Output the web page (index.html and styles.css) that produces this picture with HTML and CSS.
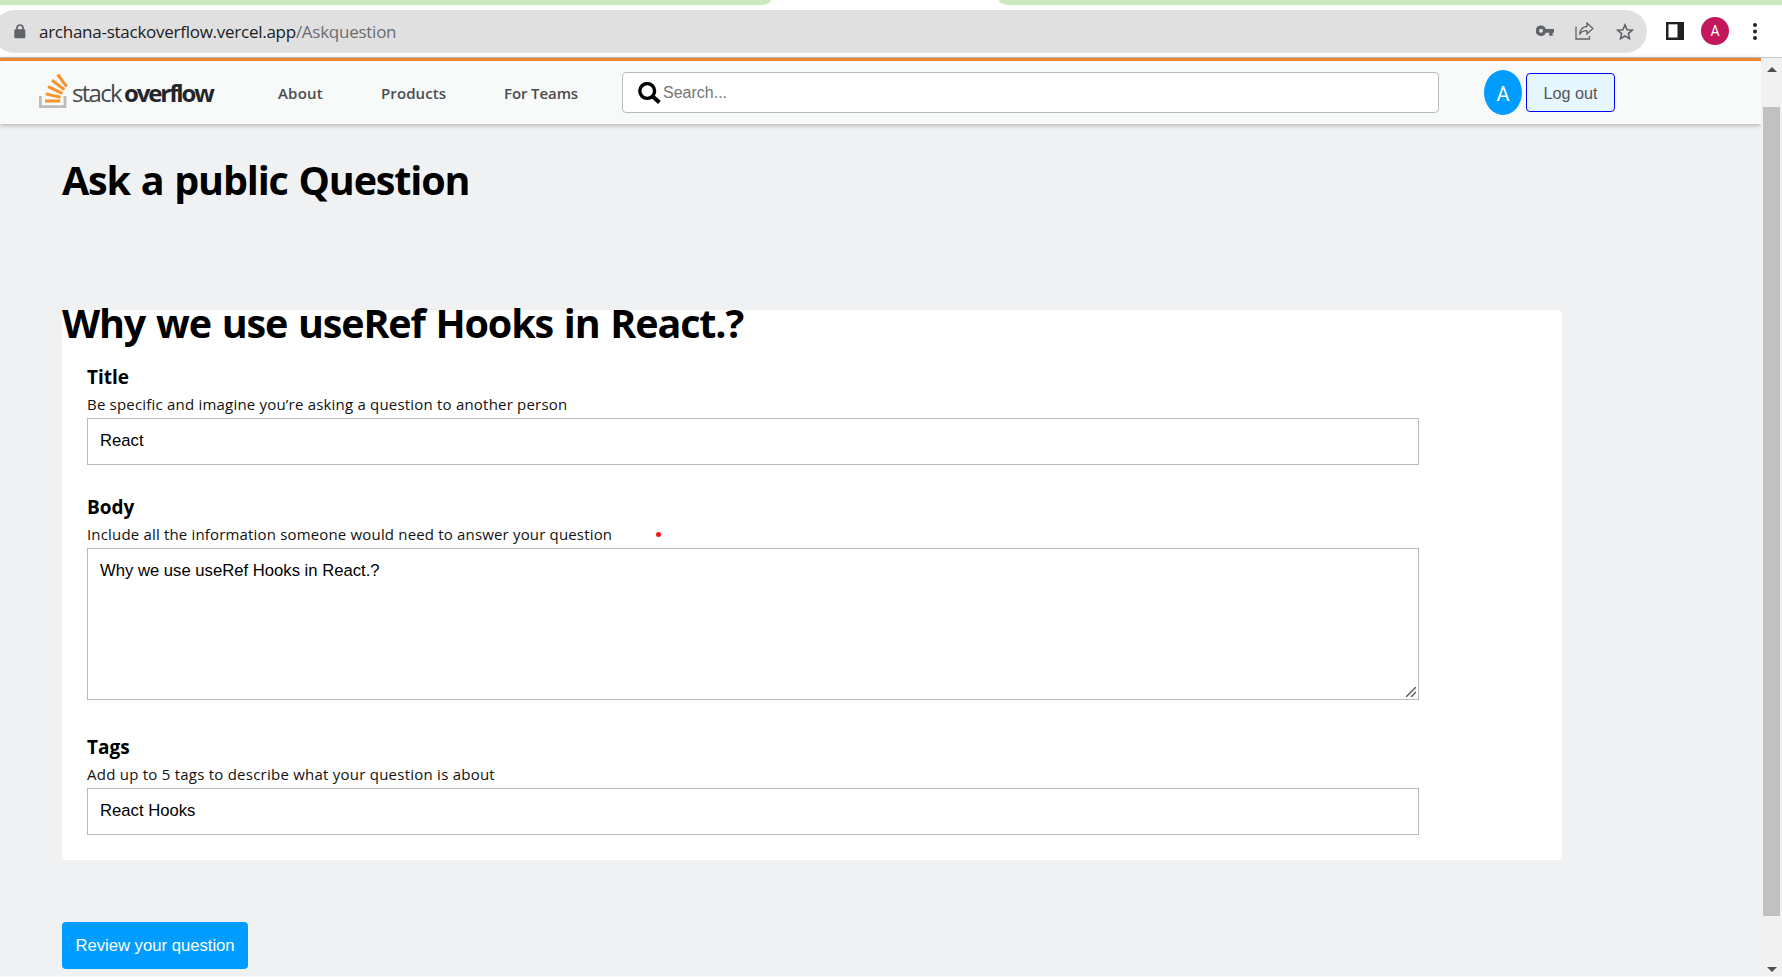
FILE: index.html
```
<!DOCTYPE html>
<html lang="en">
<head>
<meta charset="utf-8">
<title>Ask a public Question</title>
<link rel="stylesheet" href="styles.css">
</head>
<body>
<div class="window">
  <div class="tabstrip"><span class="tab tab-left"></span><span class="tab tab-right"></span></div>
  <div class="toolbar">
    <div class="omnibox">
      <svg class="lock" width="12" height="15" viewBox="0 0 12 15"><path fill="none" stroke="#5f6368" stroke-width="1.7" d="M3 6V4a3 3 0 0 1 6 0v2"/><rect x="0.3" y="5.3" width="11" height="9" rx="1.2" fill="#5f6368"/></svg>
      <div class="url"><span class="host">archana-stackoverflow.vercel.app</span><span class="path">/Askquestion</span></div>
      <svg class="key" width="18" height="12" viewBox="0 0 18 12"><path fill="#5f6368" fill-rule="evenodd" d="M5 .5a5 5 0 0 1 4.8 3.6H18v3.6h-1.300v3h-3.500v-3H9.800A5.200 5.200 0 1 1 5 .5Zm0 3.300a2 2 0 1 0 0 4 2 2 0 0 0 0-4Z"/></svg>
      <svg class="share" width="19" height="18" viewBox="0 0 19 18"><path fill="none" stroke="#5f6368" stroke-width="1.3" d="M1 4.500V17h13.500v-3M12 1l5.800 5.500L12 12V8.700C8 8.700 6 10 4.500 12.500 5 8 7.500 4.800 12 4.300Z"/></svg>
      <svg class="star" width="18" height="17" viewBox="0 0 18 17"><path fill="none" stroke="#5f6368" stroke-width="1.600" d="M9 1.900l2.100 4.800 5.200.5-3.900 3.400 1.100 5.100L9 13l-4.500 2.700 1.100-5.100L1.700 7.200l5.200-.5Z"/></svg>
    </div>
    <svg class="panel" width="18" height="18" viewBox="0 0 18 18"><rect width="18" height="18" fill="#202124"/><rect x="2.500" y="2.300" width="9" height="13.200" fill="#fff"/></svg>
    <div class="profile">A</div>
    <svg class="dots" width="4" height="17" viewBox="0 0 4 17"><g fill="#202124"><circle cx="2" cy="2" r="2"/><circle cx="2" cy="8.500" r="2"/><circle cx="2" cy="15" r="2"/></g></svg>
  </div>
  <div class="viewport">
    <div class="page">
      <nav class="navbar">
        <div class="logo">
          <svg width="29" height="36" viewBox="0 0 29 36"><path fill="none" stroke="#bcbcbc" stroke-width="2.800" d="M1.400 23V33.600H26V23"/><g stroke="#f8922b" stroke-width="3" fill="none"><path d="M6 28H21.300"/><path d="M6.700 20.900L21.600 24.200"/><path d="M9 13.700L23.500 20.300"/><path d="M13 7.200L25.300 16.600"/><path d="M18.700 1.500L27.600 13.600"/></g></svg>
          <div class="wordmark">stack<b>overflow</b></div>
        </div>
        <a class="link about">About</a><a class="link products">Products</a><a class="link teams">For Teams</a>
        <div class="search">
          <svg width="23" height="22" viewBox="0 0 23 22"><circle cx="9.200" cy="9" r="7.400" fill="none" stroke="#000" stroke-width="3.400"/><path stroke="#000" stroke-width="4" d="M14.500 14.200L21.400 20.500"/></svg>
          <span>Search...</span>
        </div>
        <div class="avatar">A</div>
        <button class="logout">Log out</button>
      </nav>
      <main class="ask">
        <h1 class="heading">Ask a public Question</h1>
        <section class="card">
          <h1 class="heading preview">Why we use useRef Hooks in React.?</h1>
          <div class="field">
            <h4 class="label">Title</h4>
            <p class="hint hint-title">Be specific and imagine you’re asking a question to another person</p>
            <div class="input">React</div>
          </div>
          <div class="field field-body">
            <h4 class="label">Body</h4>
            <p class="hint hint-body">Include all the information someone would need to answer your question<i class="dot"></i></p>
            <div class="input area"><span>Why we use useRef Hooks in React.?</span><svg class="grip" width="10" height="10" viewBox="0 0 10 10"><path stroke="#555" stroke-width="1.400" d="M0 10L10 0M5 10L10 5"/></svg></div>
          </div>
          <div class="field field-tags">
            <h4 class="label">Tags</h4>
            <p class="hint hint-tags">Add up to 5 tags to describe what your question is about</p>
            <div class="input">React Hooks</div>
          </div>
        </section>
        <button class="review">Review your question</button>
      </main>
    </div>
    <div class="scrollbar">
      <svg width="10" height="5" viewBox="0 0 10 5"><path fill="#505050" d="M0 5L5 0l5 5Z"/></svg>
      <div class="thumb"></div>
      <svg width="10" height="5" viewBox="0 0 10 5"><path fill="#505050" d="M0 0h10L5 5Z"/></svg>
    </div>
  </div>
</div>
</body>
</html>
```
FILE: styles.css
```
* { box-sizing: border-box; }
body { margin: 0; background: #fff; font-family: "Open Sans", "Noto Sans", sans-serif; overflow: hidden; }
h1, h4, p { margin: 0; }
svg { display: block; flex: none; }
.window { width: 1782px; height: 977px; display: flex; flex-direction: column; overflow: hidden; }
.tabstrip { height: 5px; flex: none; display: flex; justify-content: space-between; }
.tab { background: #cbe9bf; height: 5px; }
.tab-left { width: 771px; border-bottom-right-radius: 9px 5px; }
.tab-right { width: 783px; border-bottom-left-radius: 9px 5px; }
.toolbar { height: 53px; flex: none; display: flex; align-items: center; border-bottom: 1px solid #c9c9c9; }
.omnibox { width: 1654px; margin-left: -7px; height: 43px; border-radius: 22px; background: #e0e0e0; display: flex; align-items: center; padding-left: 21px; flex: none; }
.url { margin-left: 13px; margin-top: 1px; flex: 1; font-size: 17px; line-height: 24px; color: #202124; letter-spacing: -0.26px; white-space: nowrap; }
.path { color: #6a6c70; }
.share { margin-left: 21px; }
.star { margin-left: 22px; margin-right: 13px; }
.panel { margin-left: 19px; }
.profile { width: 28px; height: 28px; border-radius: 50%; background: #c2185b; color: #fff; font: 14px/29px Roboto, sans-serif; text-align: center; margin-left: 17px; }
.dots { margin-left: 24px; }
.viewport { flex: 1; display: flex; min-height: 0; border-bottom: 1px solid #fafafa; }
.page { width: 1761px; background: #f0f1f3; display: flex; flex-direction: column; }
.navbar { height: 66px; flex: none; border-top: 3px solid #ef8236; background: #f8f9f9; box-shadow: 0 1px 5px rgba(0,0,0,.3); display: flex; align-items: center; padding-left: 39px; }
.logo { display: flex; width: 239px; height: 40px; }
.wordmark { font: 24px/40px "Open Sans", sans-serif; color: #45484b; letter-spacing: -1.7px; margin-left: 4px; white-space: nowrap; }
.wordmark b { color: #232629; font-weight: 700; letter-spacing: -2.1px; margin-left: 3px; }
.link { font-size: 15px; line-height: 22px; font-weight: 600; color: #4a4d50; white-space: nowrap; }
.about { width: 103px; letter-spacing: 0.2px; }
.products { width: 123px; letter-spacing: 0.1px; }
.teams { width: 118px; letter-spacing: -0.1px; }
.search { width: 817px; height: 41px; border: 1px solid #b9bcbd; border-radius: 4px; background: #fff; display: flex; align-items: center; padding-left: 15px; color: #757575; font: 16px/20px "Liberation Sans", sans-serif; }
.search span { margin-left: 2px; }
.avatar { width: 38px; height: 45px; margin-left: 45px; border-radius: 50%; background: #009dff; color: #fff; font: 20px/49px Roboto, sans-serif; text-align: center; }
.logout { width: 89px; height: 39px; margin-left: 4px; border: 1px solid #00f; border-radius: 4px; background: #e7f7ff; color: #555; font: 16.2px/20px "Liberation Sans", sans-serif; padding: 0; }
.ask { padding-left: 62px; display: flex; flex-direction: column; align-items: flex-start; }
.heading { font-size: 39.5px; line-height: 54px; font-weight: 700; letter-spacing: -1.15px; word-spacing: 1.7px; color: #000; white-space: nowrap; margin-top: 29px; }
.card { width: 1500px; height: 550px; margin-top: 103px; background: #fff; border-radius: 4px; }
.heading.preview { margin-top: -14px; }
.field { padding-left: 25px; margin-top: 13px; }
.field-body { margin-top: 28px; }
.field-tags { margin-top: 33px; }
.label { font-size: 19px; line-height: 28px; font-weight: 700; }
.hint { font-size: 15px; line-height: 22px; margin-top: 2px; margin-bottom: 3px; white-space: nowrap; display: flex; align-items: center; color: #111; letter-spacing: 0.2px; }
.hint-body { letter-spacing: 0.17px; }
.hint-tags { letter-spacing: 0.24px; }
.dot { width: 5px; height: 5px; border-radius: 50%; background: #f01818; margin-left: 44px; }
.input { width: 1332px; height: 47px; border: 1px solid #b9b9b9; padding: 12px 12px 0; font: 16.67px/20px "Liberation Sans", sans-serif; color: #000; }
.area { height: 152px; display: flex; justify-content: space-between; padding-right: 2px; }
.grip { align-self: flex-end; margin-bottom: 2px; }
.review { width: 186px; height: 47px; margin-top: 62px; border: 0; border-radius: 4px; background: #009dff; color: #fff; font: 16.67px/20px "Liberation Sans", sans-serif; padding: 0; }
.scrollbar { width: 21px; background: #f1f1f1; display: flex; flex-direction: column; align-items: center; padding: 9px 0 4px; }
.thumb { width: 17px; height: 809px; margin: 35px 0 auto; background: #c1c1c1; }
```
